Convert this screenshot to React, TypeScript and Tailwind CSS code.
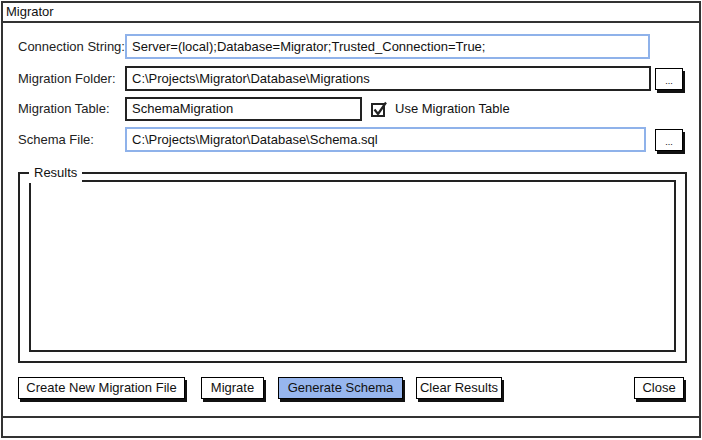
import React from "react";

const font = { fontFamily: '"Liberation Sans", Arial, sans-serif' };

function Field({
  label,
  value,
  width,
  blue,
  browse,
}: {
  label: string;
  value: string;
  width: string;
  blue?: boolean;
  browse?: boolean;
}) {
  return (
    <div className="flex items-center h-[25px]">
      <div className="w-[107px] text-[13px] text-[#222]">{label}</div>
      <div
        className={`${width} h-full flex items-center pl-[5px] border-2 bg-white text-[13px] text-[#111] ${
          blue ? "border-[#8fb2ea]" : "border-[#222]"
        }`}
      >
        {value}
      </div>
      {browse && (
        <button className="ml-auto mr-[6px] w-[28px] h-[22px] border border-black bg-white shadow-[2px_3px_0_#111] text-[9px] leading-none pb-[3px] flex items-end justify-center">
          ...
        </button>
      )}
    </div>
  );
}

function Btn({ label, w, blue }: { label: string; w: string; blue?: boolean }) {
  return (
    <button
      className={`${w} h-[22px] border border-black shadow-[2px_3px_0_#111] text-[13px] text-[#111] flex items-center justify-center ${
        blue ? "bg-[#97b6ee]" : "bg-white"
      }`}
    >
      {label}
    </button>
  );
}

export default function App() {
  return (
    <div className="w-[702px] h-[440px] bg-white pt-[1px] pl-[1px]" style={font}>
      <div className="w-[700px] h-[437px] border-2 border-[#333] flex flex-col">
        {/* title bar */}
        <div className="h-[20px] border-b-2 border-[#333] flex items-center pl-[3px] text-[13px] text-[#111]">
          Migrator
        </div>

        {/* content */}
        <div className="flex-1 flex flex-col pl-[15px] pr-[10px] pt-[11px]">
          <Field
            label="Connection String:"
            value="Server=(local);Database=Migrator;Trusted_Connection=True;"
            width="w-[525px]"
            blue
          />
          <div className="mt-[7px]">
            <Field
              label="Migration Folder:"
              value="C:\Projects\Migrator\Database\Migrations"
              width="w-[526px]"
              browse
            />
          </div>
          <div className="mt-[6px] flex items-center h-[24px]">
            <div className="w-[107px] text-[13px] text-[#222]">Migration Table:</div>
            <div className="w-[237px] h-full flex items-center pl-[5px] border-2 border-[#222] text-[13px] text-[#111]">
              SchemaMigration
            </div>
            <div className="ml-[9px] flex items-center gap-[7px] text-[13px] text-[#111]">
              <svg width="17" height="17" viewBox="0 0 17 17">
                <rect x="1" y="3" width="12" height="12" fill="none" stroke="#222" strokeWidth="2" />
                <path d="M3.5 8.5 L7 13 L15 1.5" fill="none" stroke="#222" strokeWidth="2.2" strokeLinejoin="round" />
              </svg>
              Use Migration Table
            </div>
          </div>
          <div className="mt-[6px]">
            <Field
              label="Schema File:"
              value="C:\Projects\Migrator\Database\Schema.sql"
              width="w-[521px]"
              blue
              browse
            />
          </div>

          {/* results group */}
          <div className="relative mt-[20px] w-[669px] h-[191px] border-2 border-[#222] pt-[6px] pl-[9px] pr-[9px] pb-[9px]">
            <span className="absolute -top-[11px] left-[9px] bg-white px-[5px] text-[13px] text-[#111]">
              Results
            </span>
            <div className="w-full h-full border-2 border-[#222] bg-white" />
          </div>

          {/* buttons */}
          <div className="mt-[14px] flex items-center">
            <Btn label="Create New Migration File" w="w-[167px]" />
            <div className="ml-[16px]">
              <Btn label="Migrate" w="w-[63px]" />
            </div>
            <div className="ml-[14px]">
              <Btn label="Generate Schema" w="w-[125px]" blue />
            </div>
            <div className="ml-[13px]">
              <Btn label="Clear Results" w="w-[86px]" />
            </div>
            <div className="ml-auto mr-[5px]">
              <Btn label="Close" w="w-[50px]" />
            </div>
          </div>
        </div>

        {/* status bar */}
        <div className="h-[20px] border-t-2 border-[#333]" />
      </div>
    </div>
  );
}
